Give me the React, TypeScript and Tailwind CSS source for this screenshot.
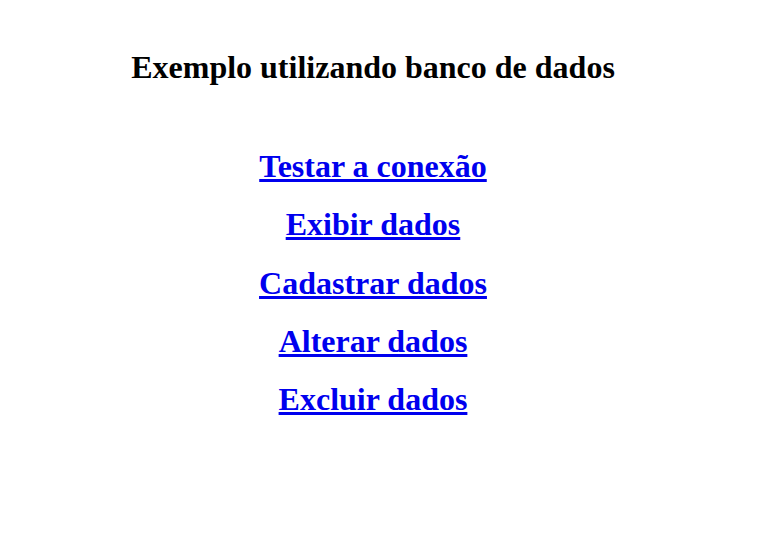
export default function App() {
  const links = [
    'Testar a conexão',
    'Exibir dados',
    'Cadastrar dados',
    'Alterar dados',
    'Excluir dados',
  ];

  return (
    <div className="min-h-screen bg-white font-['Liberation_Serif',serif] text-black">
      <div className="w-[746px] flex flex-col items-center">
        <h1 className="mt-[49px] text-[32px] leading-[36px] font-bold">
          Exemplo utilizando banco de dados
        </h1>
        <ul className="mt-[63px] flex flex-col items-center gap-[22.3px]">
          {links.map((label) => (
            <li key={label}>
              <a href="#" className="text-[32px] leading-[36px] font-bold text-[#0000ee] underline">
                {label}
              </a>
            </li>
          ))}
        </ul>
      </div>
    </div>
  );
}
